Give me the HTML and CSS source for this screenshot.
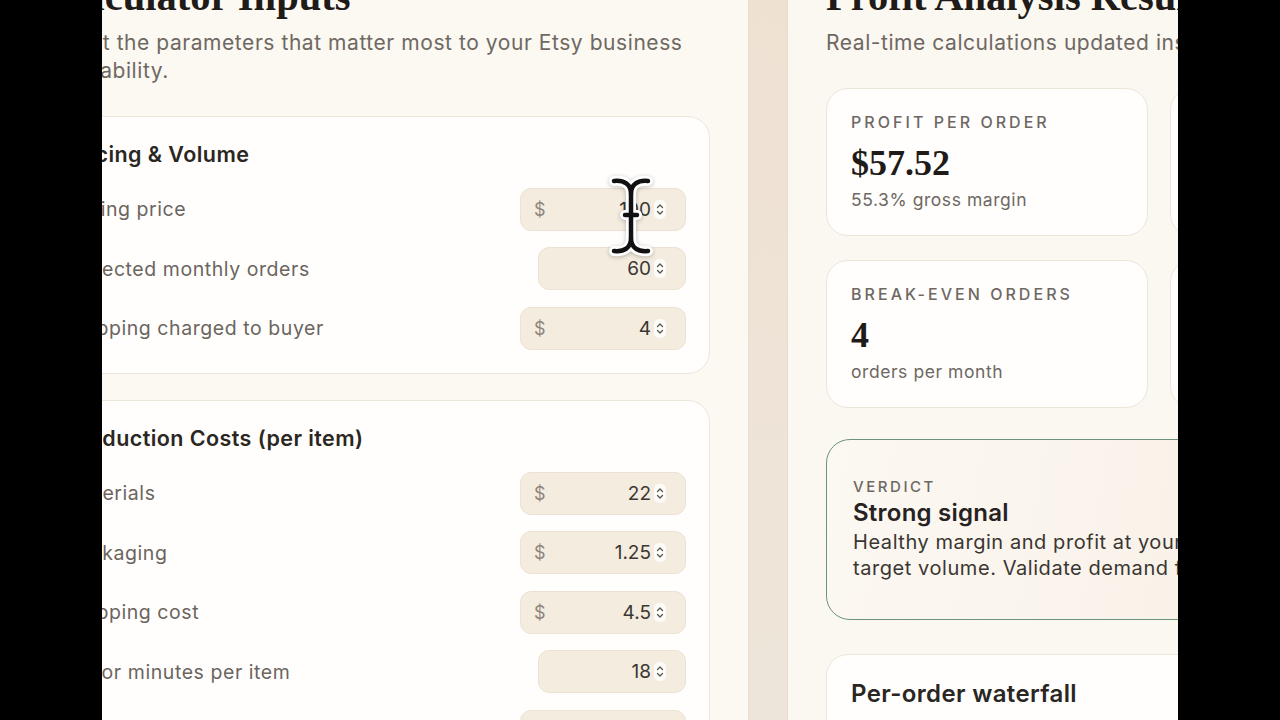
FILE: index.html
```html
<!DOCTYPE html>
<html lang="en">
<head>
<meta charset="UTF-8">
<meta name="viewport" content="width=device-width, initial-scale=1.0">
<title>Etsy Profit Calculator</title>
<link rel="stylesheet" href="styles.css">
</head>
<body>

<div class="frame">
  <div class="page">

    <!-- left column: inputs -->
    <section class="inputs">
      <h1 class="title">Calculator Inputs</h1>
      <p class="lead">Adjust the parameters that matter most to your Etsy business profitability.</p>

      <div class="card">
        <h2 class="card-title">Pricing &amp; Volume</h2>
        <div class="rows">
          <label class="row">
            <span class="label">Listing price</span>
            <span class="field money"><i class="cur">$</i><input type="text" value="100"><b class="spin"></b></span>
          </label>
          <label class="row">
            <span class="label">Expected monthly orders</span>
            <span class="field"><input type="text" value="60"><b class="spin"></b></span>
          </label>
          <label class="row">
            <span class="label">Shipping charged to buyer</span>
            <span class="field money"><i class="cur">$</i><input type="text" value="4"><b class="spin"></b></span>
          </label>
        </div>
      </div>

      <div class="card">
        <h2 class="card-title">Production Costs (per item)</h2>
        <div class="rows">
          <label class="row">
            <span class="label">Materials</span>
            <span class="field money"><i class="cur">$</i><input type="text" value="22"><b class="spin"></b></span>
          </label>
          <label class="row">
            <span class="label">Packaging</span>
            <span class="field money"><i class="cur">$</i><input type="text" value="1.25"><b class="spin"></b></span>
          </label>
          <label class="row">
            <span class="label">Shipping cost</span>
            <span class="field money"><i class="cur">$</i><input type="text" value="4.5"><b class="spin"></b></span>
          </label>
          <label class="row">
            <span class="label">Labor minutes per item</span>
            <span class="field"><input type="text" value="18"><b class="spin"></b></span>
          </label>
          <label class="row">
            <span class="label">Hourly labor rate</span>
            <span class="field money"><i class="cur">$</i><input type="text" value="20"><b class="spin"></b></span>
          </label>
        </div>
      </div>
    </section>

    <div class="divider"></div>

    <!-- right column: results -->
    <section class="results">
      <h1 class="title">Profit Analysis Results</h1>
      <p class="lead">Real-time calculations updated instantly as you type.</p>

      <div class="stats">
        <div class="stat">
          <div class="cap">Profit per order</div>
          <div class="num">$57.52</div>
          <div class="sub">55.3% gross margin</div>
        </div>
        <div class="stat">
          <div class="cap">Monthly profit</div>
          <div class="num">$3,451</div>
          <div class="sub">at 60 orders</div>
        </div>
        <div class="stat">
          <div class="cap">Break-even orders</div>
          <div class="num">4</div>
          <div class="sub">orders per month</div>
        </div>
        <div class="stat">
          <div class="cap">Effective hourly</div>
          <div class="num">$191.73</div>
          <div class="sub">per labor hour</div>
        </div>
      </div>

      <div class="verdict">
        <div class="cap">Verdict</div>
        <div class="verdict-title">Strong signal</div>
        <p class="verdict-text">Healthy margin and profit at your target volume. Validate demand first.</p>
      </div>

      <div class="waterfall">
        <h2 class="card-title">Per-order waterfall</h2>
      </div>
    </section>

  </div>

  <!-- text cursor -->
  <svg class="ibeam" width="46" height="84" viewBox="0 0 46 84">
    <g fill="none" stroke-linecap="round" stroke-linejoin="round">
      <g stroke="#fff" stroke-width="10">
        <path d="M6 6 C16 5 23 9 23 19 C23 9 30 5 40 6"/>
        <path d="M23 19 V63"/>
        <path d="M17 40 H29"/>
        <path d="M6 76 C16 77 23 73 23 63 C23 73 30 77 40 76"/>
      </g>
      <g stroke="#111" stroke-width="4.5">
        <path d="M6 6 C16 5 23 9 23 19 C23 9 30 5 40 6"/>
        <path d="M23 19 V63"/>
        <path d="M17 40 H29"/>
        <path d="M6 76 C16 77 23 73 23 63 C23 73 30 77 40 76"/>
      </g>
    </g>
  </svg>
</div>

</body>
</html>
```

FILE: styles.css
```css
html, body {
	margin: 0;
	height: 100%;
	background: #000;}

body {
	font-family: 'Inter', 'DejaVu Sans', sans-serif;
	letter-spacing: .035em;
	color: #2a2622;}

.frame {
	position: relative;
	margin-left: 102px;
	width: 1076px;
	height: 720px;
	overflow: hidden;
	background: #fbf7f1;}

.page {
	display: flex;
	margin: -25px 0 0 -98px;}

/* columns */
.inputs {
	flex: none;
	width: 744px;
	box-sizing: border-box;
	padding: 0 38px 0 40px;
	background: #fcf8f2;}

.divider {
	flex: none;
	width: 40px;
	min-height: 800px;
	background: linear-gradient(#efe1d2, #ede6dc);
	box-shadow: inset 1px 0 0 #eadfd2, inset -1px 0 0 #e8ddd0;}

.results {
	flex: none;
	width: 760px;
	box-sizing: border-box;
	padding: 0 0 0 38px;}

.title {
	margin: 0;
	font: 700 40.5px/44px 'Liberation Serif', serif;
	letter-spacing: 0;
	color: #1f1b18;}

.lead {
	margin: 10px 0 31px;
	font-size: 21px;
	line-height: 28px;
	color: #6e6862;}

/* input cards */
.card {
	background: #fffefc;
	border: 1px solid #ede6db;
	border-radius: 22px;
	padding: 23px 23px 24px 21px;
	margin-bottom: 26px;}

.card-title {
	margin: 0 0 20px;
	font-size: 21.5px;
	line-height: 28px;
	font-weight: 600;
	letter-spacing: .02em;
	color: #2a2622;}

.rows {
	display: flex;
	flex-direction: column;
	gap: 17.5px;}

.row {
	display: flex;
	align-items: center;
	justify-content: space-between;
	height: 42px;}

.label {
	font-size: 19.5px;
	color: #6b655f;}

.field {
	display: flex;
	align-items: center;
	box-sizing: border-box;
	width: 148px;
	height: 43px;
	padding: 0 19px 0 13px;
	background: #f4ecdf;
	border: 1px solid #ece2d3;
	border-radius: 11px;}

.field.money {width: 166px;}

.cur {
	font-style: normal;
	font-size: 18px;
	color: #8d867e;}

.field input {
	flex: 1;
	min-width: 0;
	padding: 0 3px 0 0;
	border: none;
	background: transparent;
	font: 19px 'Inter', sans-serif;
	letter-spacing: 0;
	color: #3b3732;
	text-align: right;}

/* up/down spinner */
.spin {
	width: 12px;
	height: 19px;
	border-radius: 5px;
	background: #fdfbf8 url("data:image/svg+xml,%3Csvg xmlns='http://www.w3.org/2000/svg' width='12' height='19'%3E%3Cpath d='M3.5 7.5 L6 5 L8.5 7.5 M3.5 11.5 L6 14 L8.5 11.5' fill='none' stroke='%23555' stroke-width='1.3' stroke-linecap='round' stroke-linejoin='round'/%3E%3C/svg%3E") no-repeat center;}

/* result cards */
.stats {
	display: grid;
	grid-template-columns: 322px 322px;
	gap: 24px 22px;}

.stat {
	background: #fffefd;
	border: 1px solid #ece5da;
	border-radius: 22px;
	padding: 24px 24px 24px;
	height: 148px;
	box-sizing: border-box;}

.cap {
	font-size: 16px;
	line-height: 18px;
	font-weight: 500;
	letter-spacing: .19em;
	text-transform: uppercase;
	color: #6d6862;}

.num {
	margin-top: 11px;
	font: 700 36px/42px 'Liberation Serif', serif;
	letter-spacing: 0;
	color: #1f1b18;}

.sub {
	margin-top: 4px;
	font-size: 17.5px;
	line-height: 24px;
	color: #6e6862;}

.verdict {
	margin-top: 31px;
	height: 181px;
	box-sizing: border-box;
	padding: 38px 26px 0;
	border: 1.5px solid #6b937a;
	border-radius: 24px;
	background: linear-gradient(100deg, #fcf8f2, #f6ece1);}

.verdict .cap {
	font-size: 15px;
	letter-spacing: .17em;}

.verdict-title {
	margin-top: 3px;
	font-size: 24px;
	line-height: 28px;
	font-weight: 600;
	letter-spacing: .01em;
	color: #25221f;}

.verdict-text {
	margin: 2px 0 0;
	max-width: 385px;
	font-size: 20px;
	line-height: 26px;
	color: #3a3632;}

.waterfall {
	margin-top: 34px;
	height: 200px;
	padding: 25px 24px;
	background: #fffefd;
	border: 1px solid #ede6db;
	border-radius: 22px;}

.waterfall .card-title {
	font-size: 24px;
	letter-spacing: .015em;}

.ibeam {
	position: absolute;
	left: 506px;
	top: 175px;
	filter: drop-shadow(0 1px 2px rgba(0,0,0,.25));}
```
